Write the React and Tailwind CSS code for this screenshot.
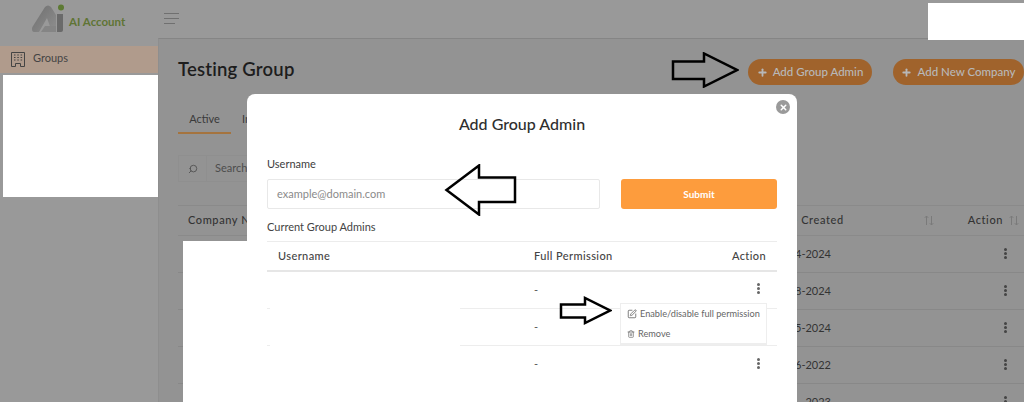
import React from "react";
import { Plus, Search, SquarePen, Trash2, X } from "lucide-react";

function Kebab({ className = "" }) {
  return (
    <span className={`flex flex-col items-center gap-[1px] ${className}`}>
      <i className="block w-[3px] h-[3px] rounded-full bg-current" />
      <i className="block w-[3px] h-[3px] rounded-full bg-current" />
      <i className="block w-[3px] h-[3px] rounded-full bg-current" />
    </span>
  );
}

function Sort() {
  return (
    <svg width="10" height="11" viewBox="0 0 10 11" fill="none" stroke="#7a7a7a" strokeWidth="1">
      <path d="M2.5 10V1M.8 2.800 2.500 1l1.700 1.800M7.500 1v9M5.800 8.200 7.500 10l1.700-1.800" />
    </svg>
  );
}

function Arrow({ className, d, w, h }) {
  return (
    <svg className={className} width={w} height={h} viewBox={`0 0 ${w} ${h}`} fill="none" stroke="#000" strokeWidth="2.5">
      <path d={d} />
    </svg>
  );
}

function BuildingIcon() {
  return (
    <svg width="14" height="15" viewBox="0 0 14 15" fill="none" stroke="#444" strokeWidth="1">
      <path d="M.5 14.500V.5h13v14H9.500v-3h-5v3Z" />
      <path d="M3 3h1.500M6.300 3h1.500M9.600 3h1.500M3 5.500h1.500M6.300 5.500h1.500M9.600 5.500h1.500M3 8h1.500M6.300 8h1.500M9.600 8h1.500" strokeWidth="1.200" />
    </svg>
  );
}

const bgRows = ["4-2024", "8-2024", "5-2024", "6-2022", "-2023"];

export default function App() {
  return (
    <div className="relative w-[1024px] h-[402px] overflow-hidden bg-[#939393] font-['Lato','Liberation_Sans',sans-serif] text-[#2a2a2a]">
      {/* header */}
      <header className="h-[38px] flex items-center bg-[#999999]">
        <div className="w-[158px] flex items-center pl-[32px]">
          <svg width="33" height="29" viewBox="0 0 33 29" className="-mt-[1px] shrink-0">
            <defs>
              <linearGradient id="lg" x1="0" y1="0" x2="1" y2="1">
                <stop offset="0" stopColor="#6e6e6e" />
                <stop offset="1" stopColor="#8f8f8f" />
              </linearGradient>
            </defs>
            <path d="M0 25q0-2 1-3L13 3q3-3 6 0l5 8v17h-4L15 14 7 28H2q-2 0-2-3Z" fill="url(#lg)" />
            <path d="M9 28l4-6h11v6Z" fill="#858585" />
            <path d="M25 10h6v16q0 2-2 2h-4Z" fill="#6a6a6a" />
            <circle cx="29" cy="3.500" r="3" fill="#5d7a33" />
          </svg>
          <span className="ml-[4px] mt-[5px] text-[11.500px] font-bold text-[#5f7434] whitespace-nowrap">AI Account</span>
        </div>
        <div className="ml-[6px] -mt-[2px] flex flex-col gap-[4px]">
          <i className="block w-[15px] h-px bg-[#707070]" />
          <i className="block w-[15px] h-px bg-[#707070]" />
          <i className="block w-[11px] h-px bg-[#707070]" />
        </div>
      </header>

      <div className="flex h-[364px]">
        {/* sidebar */}
        <aside className="w-[158px] shrink-0 pt-[8px] bg-[#999999]">
          <div className="h-[27px] flex items-center pl-[11px] bg-[#b09b8c] text-[#444444] text-[11px] gap-[8px]">
            <BuildingIcon />
            <span className="-mt-[3px]">Groups</span>
          </div>
        </aside>

        {/* main */}
        <main className="flex-1 min-w-0 pl-[19px] border-t border-t-[#858585] border-l border-l-[#8e8e8e]">
          <div className="flex items-center h-[60px]">
            <h1 className="text-[18.500px] font-semibold text-[#1d1d1d] leading-none tracking-[0.2px]">Testing Group</h1>
            <div className="ml-auto mt-[6px] flex gap-[21px]">
              <button className="h-[26px] w-[124px] rounded-full bg-[#a0632c] text-[#b8b8b8] text-[11.500px] font-medium flex items-center justify-center gap-[5px] whitespace-nowrap">
                <Plus size={11} strokeWidth={4} />
                Add Group Admin
              </button>
              <button className="h-[26px] w-[131px] rounded-full bg-[#a0632c] text-[#b8b8b8] text-[11.500px] font-medium flex items-center justify-center gap-[5px] whitespace-nowrap">
                <Plus size={11} strokeWidth={4} />
                Add New Company
              </button>
            </div>
          </div>

          <div className="flex h-[35px] text-[11px] text-[#3a3a3a]">
            <span className="w-[53px] text-center border-b-2 border-[#a5743f] pt-[12px]">Active</span>
            <span className="ml-[11px] pt-[12px]">Inactive</span>
          </div>

          <div className="mt-[21px] flex h-[27px] w-[260px] text-[11px] text-[#4d4d4d] border border-[#8f8f8f]">
            <span className="w-[28px] flex items-center justify-center border-r border-[#8f8f8f]">
              <Search size={10} className="-scale-x-100" />
            </span>
            <span className="pl-[8px] pt-[4px]">Search</span>
          </div>

          <div className="mt-[23px] h-[31px] flex items-center justify-between border-y border-[#8a8a8a] text-[11px] font-medium text-[#333333] tracking-[0.6px]">
            <span className="pl-[10px]">Company Name</span>
            <div className="flex items-center">
              <span>Date Created</span>
              <span className="ml-[80px]"><Sort /></span>
              <span className="ml-[34px]">Action</span>
              <span className="ml-[6px] mr-[5px]"><Sort /></span>
            </div>
          </div>
          {bgRows.map((d) => (
            <div key={d} className="h-[37px] flex items-center justify-end border-b border-[#888888] text-[11px] text-[#333333]">
              <span className="mr-[173px]">{d}</span>
              <Kebab className="mr-[17px] -mt-[2px] text-[#444444]" />
            </div>
          ))}
        </main>
      </div>

      {/* redaction patches */}
      <div className="absolute left-[928px] top-[3px] w-[96px] h-[37px] bg-white" />
      <div className="absolute left-[3px] top-[75px] w-[155px] h-[122px] bg-white" />
      <div className="absolute left-[183px] top-[241px] w-[64px] h-[161px] bg-white" />
      <svg className="absolute left-[246px] top-[398px]" width="6" height="4" viewBox="0 0 6 4"><path d="M1 0l4 4H1Z" fill="#222" /></svg>

      {/* modal */}
      <div className="absolute left-[247px] top-[94px] w-[550px] h-[320px] bg-white rounded-t-[8px] px-[20px] text-[#333333]">
        <span className="absolute right-[7px] top-[6px] w-[14px] h-[14px] rounded-full bg-[#9a9a9a] flex items-center justify-center text-white">
          <X size={9} strokeWidth={4} />
        </span>
        <h2 className="pt-[21px] text-center text-[16px] leading-[18px] font-medium text-[#2e2e2e]">Add Group Admin</h2>
        <div className="mt-[24px] flex gap-[21px]">
          <div className="w-[333px]">
            <label className="block text-[11px] leading-[14px] text-[#3d3d3d]">Username</label>
            <div className="mt-[8px] h-[30px] border border-[#e8e8e8] rounded-[2px] pl-[9px] flex items-center text-[11px] text-[#8a8a8a]">example@domain.com</div>
          </div>
          <button className="mt-[22px] w-[156px] h-[30px] rounded-[3px] bg-[#fd9c3d] text-white text-[10px] font-bold">Submit</button>
        </div>
        <p className="mt-[11px] text-[11px] leading-[14px] text-[#444444]">Current Group Admins</p>
        <div className="mt-[7px] border-t border-[#ececec]">
          <div className="h-[30px] flex items-center px-[11px] border-b-2 border-[#e6e6e6] text-[11px] font-medium text-[#444444] tracking-[0.4px]">
            <span className="w-[256px]">Username</span>
            <span className="flex-1">Full Permission</span>
            <span>Action</span>
          </div>
          {[0, 1, 2].map((i) => (
            <div key={i} className="h-[37px] flex items-center border-b border-[#ededed] pl-[267px] text-[11px] text-[#555555] last:border-b-0">
              <span className="flex-1">-</span>
              {i !== 1 && <Kebab className="mr-[17px] -mt-[3px] text-[#666666]" />}
            </div>
          ))}
        </div>
        {/* redacted usernames */}
        <div className="absolute left-[23px] top-[180px] w-[190px] h-[108px] bg-white" />

        {/* dropdown */}
        <div className="absolute left-[373px] top-[209px] w-[147px] h-[42px] bg-white border border-[#eeeeee] border-b-2 text-[9.200px] text-[#666666]">
          <div className="h-[20px] flex items-center gap-[3px] pl-[6px] whitespace-nowrap">
            <SquarePen size={10} />
            <span>Enable/disable full permission</span>
          </div>
          <div className="h-[20px] flex items-center gap-[3px] pl-[6px]">
            <Trash2 size={8} />
            <span>Remove</span>
          </div>
        </div>
      </div>

      {/* annotation arrows */}
      <Arrow className="absolute left-[671px] top-[52px]" w={68} h={36} d="M2 9.500H33V1.500L66 18 33 34.500V27H2Z" />
      <Arrow className="absolute left-[444px] top-[164px]" w={74} h={52} d="M71 13.500H35V1.500L2.500 26 35 50.500V38H71Z" />
      <Arrow className="absolute left-[559px] top-[296px]" w={53} h={29} d="M2 8.500H26V2L51 14.500 26 27V21.500H2Z" />
    </div>
  );
}
